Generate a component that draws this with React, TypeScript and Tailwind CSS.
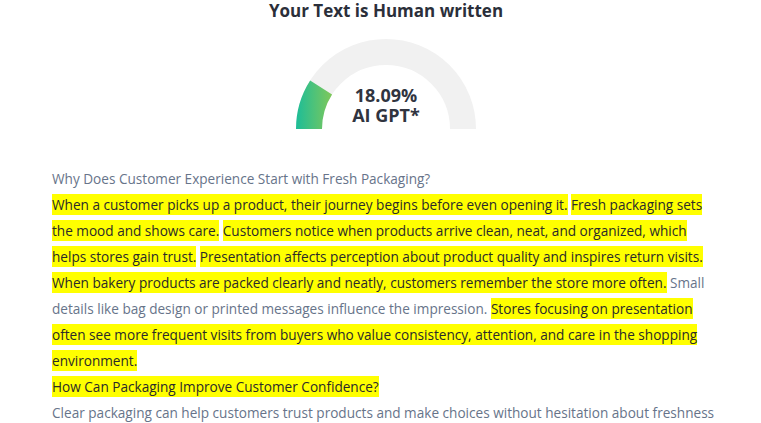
import React from "react";

function Hl({ children }: { children: React.ReactNode }) {
  return <span className="bg-[#ffff00] text-[#2a2a2a] py-[1px]">{children}</span>;
}

function Gauge() {
  const pct = 18.09;
  const ang = Math.PI - (pct / 100) * Math.PI;
  const ex = 90 + 77 * Math.cos(ang);
  const ey = 90 - 77 * Math.sin(ang);
  return (
    <div className="relative w-[180px] h-[90px]">
      <svg width="180" height="90" viewBox="0 0 180 90" className="block">
        <defs>
          <linearGradient id="g" x1="0" y1="0" x2="44" y2="0" gradientUnits="userSpaceOnUse">
            <stop offset="0" stopColor="#1dbd98" />
            <stop offset="1" stopColor="#95ca4c" />
          </linearGradient>
        </defs>
        <path d="M 13 90 A 77 77 0 0 1 167 90" fill="none" stroke="#f1f1f1" strokeWidth="26" />
        <path d={`M 13 90 A 77 77 0 0 1 ${ex} ${ey}`} fill="none" stroke="url(#g)" strokeWidth="26" />
      </svg>
      <div className="absolute left-0 right-0 top-[46px] flex flex-col items-center text-[18px] leading-[20px] font-bold text-[#30343f]">
        <div>18.09%</div>
        <div>AI GPT*</div>
      </div>
    </div>
  );
}

export default function App() {
  return (
    <div className="w-[761px] h-[423px] overflow-hidden bg-white font-['Open_Sans',sans-serif]">
      <div className="pl-[52px] w-[720px]">
        <div className="flex flex-col items-center">
          <h1 className="text-[17px] leading-[22px] font-bold text-[#2b2f3a]">Your Text is Human written</h1>
          <div className="mt-[17px]">
            <Gauge />
          </div>
        </div>
        <div className="mt-[37px] text-[13.6px] leading-[26px] text-[#67748a]">
          <div>Why Does Customer Experience Start with Fresh Packaging?</div>
          <p>
            <Hl>When a customer picks up a product, their journey begins before even opening it.</Hl>{" "}
            <Hl>Fresh packaging sets the mood and shows care.</Hl>{" "}
            <Hl>Customers notice when products arrive clean, neat, and organized, which helps stores gain trust.</Hl>{" "}
            <Hl>Presentation affects perception about product quality and inspires return visits.</Hl>{" "}
            <Hl>When bakery products are packed clearly and neatly, customers remember the store more often.</Hl>{" "}
            Small details like bag design or printed messages influence the impression.{" "}
            <Hl>Stores focusing on presentation often see more frequent visits from buyers who value consistency, attention, and care in the shopping environment.</Hl>
          </p>
          <div>
            <Hl>How Can Packaging Improve Customer Confidence?</Hl>
          </div>
          <p>Clear packaging can help customers trust products and make choices without hesitation about freshness</p>
        </div>
      </div>
    </div>
  );
}
